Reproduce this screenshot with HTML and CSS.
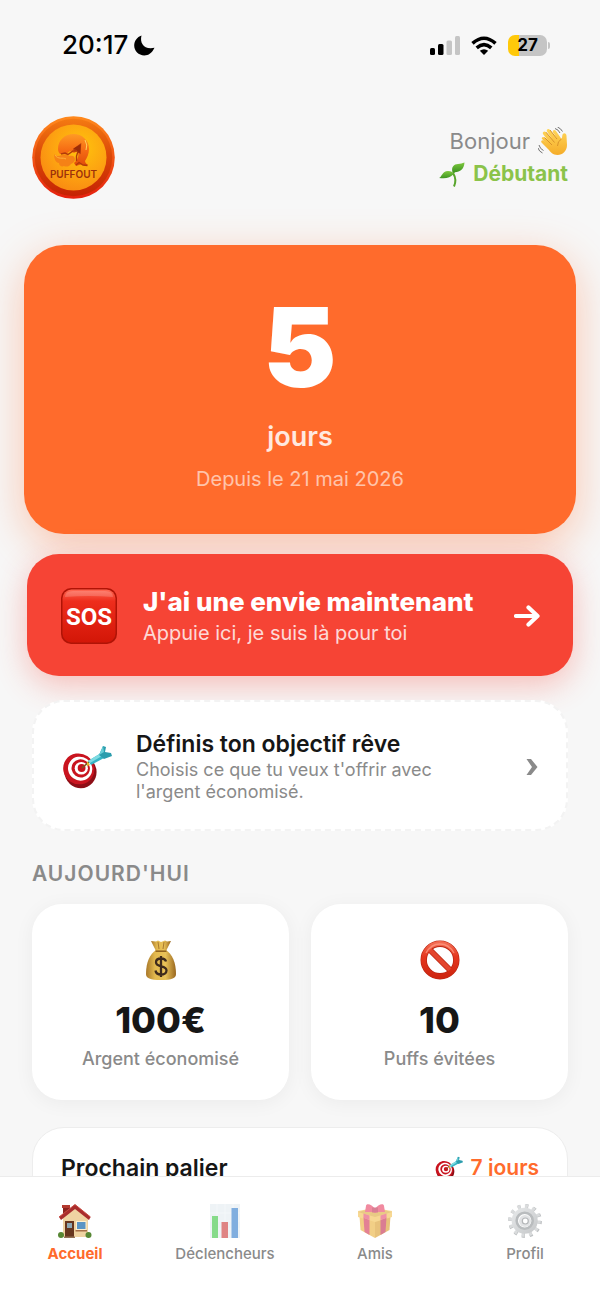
FILE: index.html
```html
<!DOCTYPE html>
<html lang="fr">
<head>
<meta charset="utf-8">
<meta name="viewport" content="width=device-width, initial-scale=1">
<title>PuffOut – Accueil</title>
<link rel="stylesheet" href="styles.css">
</head>
<body>
<svg class="defs" aria-hidden="true">
  <defs>
    <linearGradient id="rim" x1="0" y1="0" x2="0" y2="1"><stop offset="0" stop-color="#f47a12"/><stop offset=".45" stop-color="#dc4a08"/><stop offset="1" stop-color="#c52204"/></linearGradient>
    <linearGradient id="edge" x1="0" y1="0" x2="0" y2="1"><stop offset="0" stop-color="#ff8a1c"/><stop offset="1" stop-color="#e5200f"/></linearGradient>
    <radialGradient id="disc" cx=".6" cy=".35" r=".7"><stop offset="0" stop-color="#ffc40c"/><stop offset=".6" stop-color="#fda311"/><stop offset="1" stop-color="#f98a12"/></radialGradient>
    <linearGradient id="puff" x1="0" y1="0" x2="0" y2="1"><stop offset="0" stop-color="#ff9a24"/><stop offset=".5" stop-color="#f66c14"/><stop offset="1" stop-color="#e04c0a"/></linearGradient>
    <linearGradient id="sosFill" x1="0" y1="0" x2="0" y2="1"><stop offset="0" stop-color="#ff6a55"/><stop offset=".22" stop-color="#ee2d1c"/><stop offset="1" stop-color="#d31607"/></linearGradient>
    <linearGradient id="bagFill" x1="0" y1="0" x2="1" y2="0"><stop offset="0" stop-color="#a9782a"/><stop offset=".3" stop-color="#e3b94e"/><stop offset=".65" stop-color="#e9c158"/><stop offset="1" stop-color="#99671f"/></linearGradient>
    <linearGradient id="noFill" x1="0" y1="0" x2="0" y2="1"><stop offset="0" stop-color="#f26a50"/><stop offset=".4" stop-color="#e5371f"/><stop offset="1" stop-color="#cf2610"/></linearGradient>
    <linearGradient id="handFill" x1="0" y1="0" x2="0" y2="1"><stop offset="0" stop-color="#ffd65a"/><stop offset="1" stop-color="#f5ac28"/></linearGradient>
    <linearGradient id="leafFill" x1="0" y1="0" x2="0" y2="1"><stop offset="0" stop-color="#7fc93e"/><stop offset="1" stop-color="#3d9421"/></linearGradient>
    <linearGradient id="gearFill" x1="0" y1="0" x2="1" y2="1"><stop offset="0" stop-color="#d3d6d8"/><stop offset="1" stop-color="#a4a8ab"/></linearGradient>
    <symbol id="dart" viewBox="0 0 50 44">
      <ellipse cx="18.500" cy="27" rx="16" ry="16.500" fill="#8d0e16" transform="rotate(-25 18 27)"/>
      <ellipse cx="16.800" cy="24" rx="15.800" ry="15.300" fill="#c9141f" transform="rotate(35 17 24)"/>
      <ellipse cx="18.500" cy="23.500" rx="12.300" ry="11.800" fill="#fff" transform="rotate(35 18 23)"/>
      <ellipse cx="19" cy="23.500" rx="9.300" ry="9" fill="#c9141f" transform="rotate(35 19 23)"/>
      <ellipse cx="19.300" cy="23.300" rx="6.600" ry="6.300" fill="#fff"/>
      <circle cx="19.600" cy="23" r="3.900" fill="#c9141f"/>
      <path d="M20 23l8-7" stroke="#7b5b21" stroke-width="1.600"/>
      <path d="M26 16l3 4 13-7-3-5z" fill="#36b5c5"/>
      <path d="M26 16l2 2 12-7-1-3z" fill="#7edbe2"/>
      <path d="M37 10l4-9 3 1-1 5 6 1 1 3-8 3z" fill="#2b9dad"/>
      <path d="M37 10l4-9 1 6z" fill="#68ced7"/>
      <path d="M25 16l3 4-3 1z" fill="#e6ba2e"/>
    </symbol>
  </defs>
</svg>
<div class="app">
  <div class="status">
    <div class="status-group">
      <span class="clock">20:17</span>
      <svg class="moon" viewBox="0 0 21 21" role="img" aria-label="Ne pas déranger"><path d="M7.500 0.500C5.500 8 10 15 20.500 12.800C18 18 14.500 20.500 10.300 20.500C4.500 20.500 0.200 16 0.200 10.600C0.200 6 3 2 7.500 0.500Z"/></svg>
    </div>
    <div class="status-group status-right">
      <svg class="signal" viewBox="0 0 30 19" role="img" aria-label="Réseau"><rect y="12" width="5" height="7" rx="1.500"/><rect x="8" y="8" width="5.500" height="11" rx="1.500"/><g fill="#c5c5c5"><rect x="16.500" y="4.500" width="5.500" height="14.500" rx="1.500"/><rect x="25" width="5" height="19" rx="1.500"/></g></svg>
      <svg class="wifi" viewBox="0 0 26 19" role="img" aria-label="Wi-Fi"><g fill="none" stroke="#000" stroke-width="3.600"><path d="M1.500 7.300Q13-2.800 24.500 7.300"/><path d="M5.700 11.800Q13 5.600 20.300 11.800"/></g><path d="M8.800 14.700Q13 11.600 17.200 14.700L13 19Z"/></svg>
      <div class="battery"><span>27</span></div>
    </div>
  </div>

  <main class="content">
    <header class="header">
      <svg class="logo" viewBox="0 0 83 83" role="img" aria-label="PuffOut">
        <circle cx="41.500" cy="41.500" r="41.300" fill="url(#edge)"/>
        <circle cx="41.500" cy="41.500" r="38.800" fill="url(#rim)"/>
        <circle cx="41.500" cy="41.500" r="33" fill="url(#disc)"/>
        <path d="M26 33C26 24 33 18 41.500 18C50 18 57 24 57 33C57 38 55 42 53 45C53 47 55 48 56 49C54 50 52 49 50 48L44 50L42 47C46 44 47 40 46 35L42 37L38 35L34 38L28 38C27 37 26 35 26 33Z" fill="url(#puff)"/>
        <path d="M22 38C24 41 27 40 30 39C33 38 35 38 37 40C40 39 43 40 43 43C43 46 41 47 39 48C37 51 34 51 32 50C30 51 27 50 27 47C24 47 22 43 22 38Z" fill="#f58216"/>
        <path d="M23 39C26 44 31 41 34 43" fill="none" stroke="#ffb13c"/>
        <path d="M29 38L33 37L36 38.500L41 35L44 35L42 33L48.500 28.500L48 37L46 35.500L44.500 40L44.500 45" fill="none" stroke="#b23a0a" stroke-width="1.400"/>
        <path d="M41.500 32.500L48.500 28.500L48 37Z" fill="#9c2d08"/>
        <path d="M44 49L47 46.500L51 49L55.500 49.500" fill="none" stroke="#b23a0a" stroke-width="1.400"/>
        <path d="M53 24Q56 29 54 34" fill="none" stroke="#ffd35c" stroke-width="1"/>
        <text class="logo-text" x="41.500" y="62" text-anchor="middle">PUFFOUT</text>
      </svg>
      <div class="greeting">
        <p class="hello">Bonjour
          <svg class="wave" viewBox="0 0 30 29" aria-hidden="true"><path d="M4 12C3 10.500 5 9 6.500 10.500L11 15L5 7C4 5 6.500 3.500 8 5.200L14 12L9 4.500C8 2.500 10.500 1 12 3L19 11.500L15 5.500C14 3.500 16.500 2 18 4L23.500 12C24.500 10 24 8 25 6.800C26.500 5.500 28.500 6.500 28.500 9L29 18C29 24 24.500 28 19.500 28C15 28 12.500 25 10 22L3.500 15.500C2.500 14 4 12.500 5.500 13.600L9 16.500Z" fill="url(#handFill)"/><path d="M6.500 10.500L14 18M8 5.200L16.500 15.500M12 3L19 12M19.500 19Q19.500 14 23.500 12" fill="none" stroke="#d9932a"/><path d="M17 1.500Q20.500 2.500 22 6M19.500 0Q23 1.500 24.500 4.500M1 18Q2 22 5.500 23.500M0 21Q1 24.500 4.500 26" fill="none" stroke="#737373"/></svg></p>
        <p class="level"><svg class="sprout" viewBox="0 0 26 25" aria-hidden="true"><path d="M15 24.500C17 20 16.500 15 14 11M14 13Q14 9 18 7" fill="none" stroke="#58a52c" stroke-width="2"/><path d="M0 16C3 15 3 9 9 9C12 9 14 10 14.500 12C11 16 7 17 0 16Z" fill="url(#leafFill)"/><path d="M13.500 10C12 5 15 2 19 2C22 2 23 1 25.500 0.500C25 8 20 11 13.500 10Z" fill="url(#leafFill)"/></svg>
          Débutant</p>
      </div>
    </header>

    <section class="hero">
      <strong class="hero-count">5</strong>
      <span class="hero-unit">jours</span>
      <span class="hero-since">Depuis le 21 mai 2026</span>
    </section>

    <button class="sos" type="button">
      <svg class="sos-icon" viewBox="0 0 56 56" aria-hidden="true"><rect width="56" height="56" rx="10" fill="#b01306"/><rect x="1.500" y="1.500" width="53" height="53" rx="9" fill="url(#sosFill)"/><path d="M4 9Q4 3 12 3H44Q52 3 52 9Q28 7 4 9Z" fill="#fff" opacity=".18"/><text class="sos-text" x="28" y="37" text-anchor="middle">SOS</text></svg>
      <span class="row-text">
        <span class="sos-title">J'ai une envie maintenant</span>
        <span class="sos-sub">Appuie ici, je suis là pour toi</span>
      </span>
      <svg class="arrow" viewBox="0 0 26 22" aria-hidden="true"><path d="M2 11H23M14.500 2.500L23.500 11L14.500 19.500" fill="none" stroke="#fff" stroke-width="4.200" stroke-linecap="round" stroke-linejoin="round"/></svg>
    </button>

    <button class="goal" type="button">
      <svg class="goal-icon" aria-hidden="true"><use href="#dart"/></svg>
      <span class="row-text">
        <span class="goal-title">Définis ton objectif rêve</span>
        <span class="goal-sub">Choisis ce que tu veux t'offrir avec l'argent économisé.</span>
      </span>
      <svg class="chevron" viewBox="0 0 12 16" aria-hidden="true"><path d="M0.500 0H5L11.500 8L5 16H0.500L6 8Z" fill="#8a8a8a"/></svg>
    </button>

    <h2 class="section-title">Aujourd'hui</h2>
    <div class="stats">
      <article class="stat">
        <svg class="stat-icon" viewBox="0 0 40 40" aria-hidden="true"><path d="M10 1L15 1.500L17 0.500L20 2L24 0.500L26 1.500L30 1L25 11H15Z" fill="url(#bagFill)"/><path d="M15 10H25C31 14 35 22 35 34C35 38 31 40 20 40S5 38 5 34C5 22 9 14 15 10Z" fill="url(#bagFill)"/><path d="M14.500 11.200H25.500" stroke="#8b5c1d" stroke-width="1.500"/><path d="M17 2L18 9M23 2L22 9" stroke="#a8792f"/><path d="M25 21.500C24.500 19.500 22.500 18.500 20 18.500C17 18.500 15 20 15 22.300C15 28 25.500 24.500 25.500 30.500C25.500 33 23 34.500 20 34.500C17 34.500 14.800 33 14.500 30.500M20 16V37" fill="none" stroke="#3f2a1c" stroke-width="2.300"/></svg>
        <strong class="stat-value">100€</strong>
        <span class="stat-label">Argent économisé</span>
      </article>
      <article class="stat">
        <svg class="stat-icon" viewBox="0 0 40 40" aria-hidden="true"><g fill="none"><circle cx="20" cy="20" r="16.300" stroke="#bb2410" stroke-width="6.400"/><path d="M8.500 8.500L31.500 31.500" stroke="#bb2410" stroke-width="6"/><path d="M8.500 8.500L31.500 31.500" stroke="#e4452c" stroke-width="4.400"/><circle cx="20" cy="20" r="16.400" stroke="url(#noFill)" stroke-width="5"/><path d="M6 13Q11 4 20 4T34 13" stroke="#ffa08a" stroke-width="1.300" opacity=".7"/></g></svg>
        <strong class="stat-value">10</strong>
        <span class="stat-label">Puffs évitées</span>
      </article>
    </div>

    <section class="milestone">
      <h3 class="milestone-title">Prochain palier</h3>
      <span class="milestone-value"><svg class="milestone-icon" aria-hidden="true"><use href="#dart"/></svg>7 jours</span>
    </section>
  </main>

  <nav class="tabs">
    <a class="tab active" href="#accueil" aria-current="page">
      <svg class="tab-icon" viewBox="0 0 34 34" aria-hidden="true"><path d="M5 2H12V12H5Z" fill="#8c231f"/><path d="M4 1H12V4H4Z" fill="#b43a30"/><path d="M5 14L17 3L30 14V33H5Z" fill="#efd3a2"/><path d="M1 13L17 0.500L32.500 13L31 16L17 5L3 16Z" fill="#a92d2d"/><path d="M1 13L17 0.500L32.500 13" fill="none" stroke="#c94a40" stroke-width="1"/><rect x="7" y="17" width="9" height="16" fill="#67361f"/><rect x="9" y="19" width="5" height="5" fill="#8da7b3"/><rect x="18" y="17" width="10.500" height="9" fill="#fff1cf"/><rect x="19" y="18" width="8.500" height="7" fill="#5c95c4"/><rect x="17.500" y="26" width="11.500" height="1.500" fill="#a66f47"/><path d="M6 32.500H17V34H6Z" fill="#937256"/><circle cx="3" cy="31" r="3" fill="#578734"/><circle cx="30.500" cy="31" r="3" fill="#578734"/></svg>
      Accueil
    </a>
    <a class="tab" href="#declencheurs">
      <svg class="tab-icon" viewBox="0 0 34 34" aria-hidden="true"><rect x="2" width="30" height="34" fill="#e3ecf1"/><path d="M2 9H32M2 17H32M2 25H32M9 0V34M17 0V34M25 0V34" stroke="#eef4f7"/><path d="M4 12H10V34H4Z" fill="#37c43e"/><path d="M13.500 18H20V34H13.500Z" fill="#cb3434"/><path d="M23.500 4H30V34H23.500Z" fill="#2c79cb"/></svg>
      Déclencheurs
    </a>
    <a class="tab" href="#amis">
      <svg class="tab-icon" viewBox="0 0 34 34" aria-hidden="true"><path d="M1.500 12L17 17V34L2.500 26Z" fill="#eab036"/><path d="M17 17L32.500 12L31.500 26L17 34Z" fill="#d99b25"/><path d="M0 7L16 4L34 7V13L17 18L0 13Z" fill="#f3bf4c"/><path d="M0 8L17 13L34 8L17 4Z" fill="#dba735"/><path d="M5.500 13.500L11.500 16V31L6.500 28Z" fill="#d22e4e"/><path d="M22.500 16L28.500 13.500L27.500 28L22.500 31Z" fill="#c3284a"/><path d="M5.500 9.500L11.500 11.500V16L5.500 14Z" fill="#e5486c"/><path d="M22.500 11.500L28.500 9.500V14L22.500 16Z" fill="#e5486c"/><path d="M17 5C14 0 8-1 8 2L7 8L15 8L17 9L19 8L27 8L26 2C26-1 20 0 17 5Z" fill="#e83e62"/><path d="M14 3.500H20V8.500H14Z" fill="#c02b4e"/></svg>
      Amis
    </a>
    <a class="tab" href="#profil">
      <svg class="tab-icon gear" viewBox="0 0 34 34" aria-hidden="true"><circle cx="17" cy="17" r="14.400" fill="none" stroke="#94999c" stroke-width="5" stroke-dasharray="2.900 4.640"/><circle cx="16.500" cy="16.500" r="14" fill="none" stroke="#c3c6c8" stroke-width="4.500" stroke-dasharray="2.900 4.430"/><circle cx="16.700" cy="16.700" r="10.300" fill="none" stroke="url(#gearFill)" stroke-width="5.500"/><circle cx="16.700" cy="16.700" r="8" fill="none" stroke="#8b9093" stroke-width="2.600"/><circle cx="17" cy="17" r="6" fill="#cfd2d4"/><circle cx="17.300" cy="17" r="3" fill="#fff" stroke="#83878a" stroke-width="1.200"/></svg>
      Profil
    </a>
  </nav>
</div>
</body>
</html>
```
FILE: styles.css
```css
* { box-sizing: border-box; }
body {
  margin: 0;
  background: #f7f7f7;
  color: #161616;
  font-family: Inter, "Liberation Sans", sans-serif;
}
p, h2, h3 { margin: 0; }
svg { display: block; flex: none; }
button { border: 0; font: inherit; color: inherit; text-align: left; cursor: pointer; }
.defs { position: absolute; width: 0; height: 0; }

.app { display: flex; flex-direction: column; height: 100vh; overflow: hidden; }

.status {
  display: flex;
  justify-content: space-between;
  align-items: center;
  flex: none;
  height: 90px;
  padding: 0 53px 0 62px;
  color: #000;
}
.status-group { display: flex; align-items: center; gap: 6px; }
.status-right { gap: 11px; }
.clock { font-size: 26px; font-weight: 500; line-height: 30px; }
.moon { width: 21px; height: 21px; }
.signal { width: 30px; height: 19px; }
.wifi { width: 26px; height: 19px; }
.battery {
  position: relative;
  width: 39px;
  height: 21px;
  border-radius: 7px;
  background: linear-gradient(90deg, #ffc90a 27%, #c5c5c5 27%);
  font-size: 17px;
  font-weight: 700;
  line-height: 21px;
  text-align: center;
}
.battery::after {
  content: "";
  position: absolute;
  top: 7px;
  right: -3px;
  width: 2px;
  height: 7px;
  border-radius: 0 2px 2px 0;
  background: #c5c5c5;
}

.content { flex: 1; min-height: 0; overflow: hidden; padding: 26px 32px 0; }

.header { display: flex; justify-content: space-between; align-items: center; margin-bottom: 46px; }
.logo { width: 83px; height: 83px; }
.logo-text { font-size: 10px; font-weight: 600; fill: #9d310b; }
.greeting { display: flex; flex-direction: column; align-items: flex-end; gap: 3px; }
.hello, .level { display: flex; align-items: center; gap: 8px; line-height: 30px; }
.hello { color: #8a8a8a; font-size: 22px; }
.level { color: #8bc34a; font-size: 21px; font-weight: 700; }
.wave { width: 30px; height: 29px; }
.sprout { width: 26px; height: 25px; }

.hero {
  display: flex;
  flex-direction: column;
  align-items: center;
  margin: 0 -8px 20px;
  padding: 40px 40px 42px;
  border-radius: 40px;
  background: #ff6b2c;
  box-shadow: 0 12px 44px rgba(255, 107, 44, .36);
  color: #fff;
}
.hero-count { font-size: 110px; font-weight: 900; line-height: 124px; }
.hero-unit { margin-top: 11px; font-size: 27px; font-weight: 600; line-height: 34px; opacity: .85; }
.hero-since { margin-top: 12px; font-size: 20px; line-height: 26px; opacity: .6; }

.sos, .goal { display: flex; align-items: center; }
.row-text { display: flex; flex-direction: column; flex: 1; min-width: 0; }
.sos {
  width: calc(100% + 10px);
  margin: 0 -5px 24px;
  padding: 31px 33px 29px 34px;
  border-radius: 32px;
  background: #f64435;
  box-shadow: 0 9px 32px rgba(246, 68, 53, .32);
  color: #fff;
}
.sos-icon { width: 56px; height: 56px; margin-right: 26px; }
.sos-text { font-family: Roboto, sans-serif; font-size: 24px; font-weight: 700; fill: #fff; }
.sos-title { font-size: 26px; font-weight: 800; line-height: 34px; }
.sos-sub { font-size: 20px; line-height: 28px; opacity: .8; }
.arrow { width: 26px; height: 22px; }

.goal {
  position: relative;
  width: 100%;
  margin-bottom: 30px;
  padding: 29px 28px 26px;
  border: 2px dashed #f3f3f3;
  border-radius: 32px;
  background: #fff;
}
.goal-icon { width: 50px; height: 44px; margin-right: 24px; }
.goal-title { margin-bottom: 2px; font-size: 23px; font-weight: 600; line-height: 26px; }
.goal-sub { max-width: 320px; color: #8a8a8a; font-size: 18px; line-height: 22px; }
.chevron { width: 12px; height: 16px; }

.section-title {
  margin-bottom: 17px;
  color: #8a8a8a;
  font-size: 21px;
  font-weight: 600;
  line-height: 26px;
  letter-spacing: 1px;
  text-transform: uppercase;
}

.stats { display: grid; grid-template-columns: 1fr 1fr; gap: 22px; margin-bottom: 27px; }
.stat {
  display: flex;
  flex-direction: column;
  align-items: center;
  padding: 36px 16px 28px;
  border-radius: 30px;
  background: #fff;
  box-shadow: 0 3px 20px rgba(0, 0, 0, .05);
}
.stat-icon { width: 40px; height: 40px; margin-bottom: 20px; }
.stat-value { font-size: 36px; font-weight: 800; line-height: 40px; }
.stat-label { margin-top: 6px; color: #8a8a8a; font-size: 18px; font-weight: 500; line-height: 26px; }

.milestone {
  display: flex;
  justify-content: space-between;
  align-items: center;
  padding: 26px 28px 60px;
  border: 1px solid #ededed;
  border-radius: 32px;
  background: #fff;
}
.milestone-title { font-size: 23px; font-weight: 600; line-height: 28px; }
.milestone-value {
  display: flex;
  align-items: center;
  gap: 8px;
  color: #ff6b2c;
  font-size: 21px;
  font-weight: 600;
  line-height: 28px;
}
.milestone-icon { width: 28px; height: 25px; }

.tabs {
  display: grid;
  grid-template-columns: repeat(4, 1fr);
  flex: none;
  padding: 27px 0 34px;
  border-top: 1px solid #ececec;
  background: #fff;
}
.tab {
  display: flex;
  flex-direction: column;
  align-items: center;
  gap: 6px;
  color: #8a8a8a;
  font-size: 15px;
  font-weight: 500;
  line-height: 20px;
  text-decoration: none;
}
.tab-icon { width: 34px; height: 34px; opacity: .6; }
.active { color: #ff6b2c; font-weight: 700; }
.active .tab-icon { opacity: 1; }
```
